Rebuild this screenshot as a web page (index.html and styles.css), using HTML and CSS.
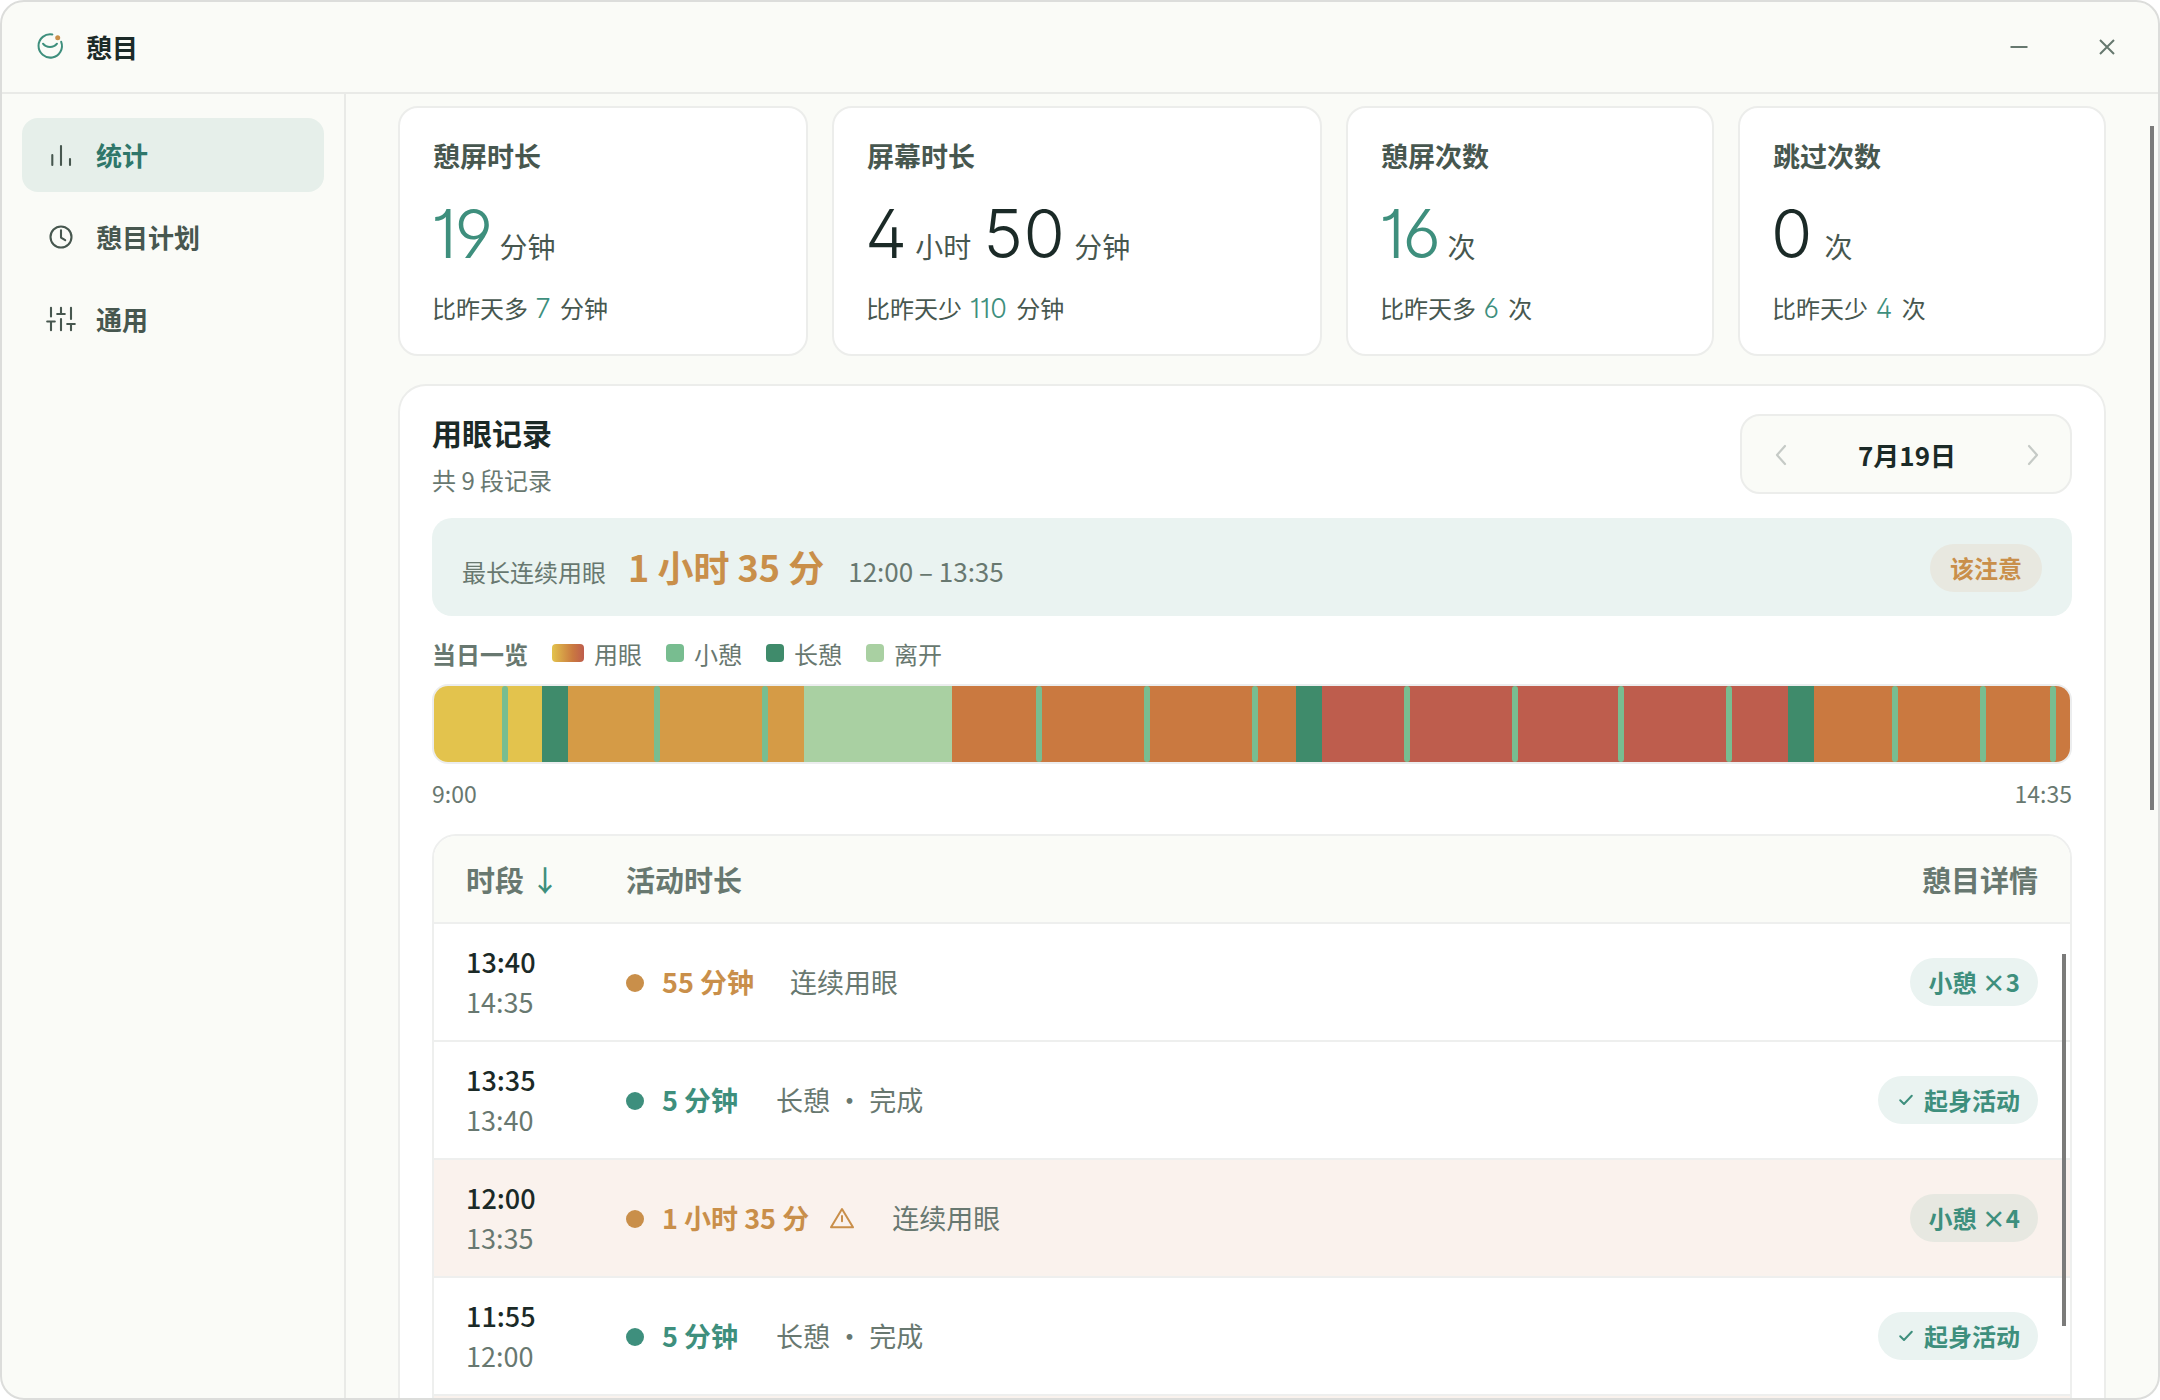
FILE: index.html
```html
<!DOCTYPE html>
<html lang="zh-CN">
<head>
<meta charset="utf-8">
<title>憩目</title>
<link rel="stylesheet" href="styles.css">
</head>
<body>
<div class="window">
  <header class="titlebar">
    <svg class="logo" viewBox="0 0 32 32">
      <path d="M18.4 4.4A11.7 11.7 0 1 0 27.2 11.8" stroke="#3e8f7d"/>
      <path d="M9 13.7C12.5 18.2 19.5 18.2 23 13.7" stroke="#3e8f7d"/>
      <circle cx="23.7" cy="7.7" r="2.5" fill="#c98f4a" stroke="none"/>
    </svg>
    <span class="app-name">憩目</span>
    <div class="controls">
      <svg viewBox="0 0 20 20"><path d="M1.5 10H18.5"/></svg>
      <svg viewBox="0 0 20 20"><path d="M3 3L17 17M17 3L3 17"/></svg>
    </div>
  </header>
  <div class="body">
    <nav class="sidebar">
      <a class="nav-item active">
        <svg viewBox="0 0 32 32"><path d="M7.3 16V26M16 7V26M25 20V26"/></svg>
        <span>统计</span>
      </a>
      <a class="nav-item">
        <svg viewBox="0 0 32 32"><circle cx="16" cy="16" r="10.5"/><path d="M16 9.3V16.6L20.2 19.2"/></svg>
        <span>憩目计划</span>
      </a>
      <a class="nav-item">
        <svg viewBox="0 0 32 32"><path d="M6 27.3V18.5M6 13.5V4.8M16 27.3V16M16 11V4.8M26 27.3V21M26 16V4.8M2.2 18.5H9.8M12.2 11H19.8M22.2 21H29.8"/></svg>
        <span>通用</span>
      </a>
    </nav>
    <main class="content">
      <section class="cards">
        <article class="card">
          <h3>憩屏时长</h3>
          <p class="value green"><b>19</b><span>分钟</span></p>
          <p class="delta">比昨天多 <b>7</b> 分钟</p>
        </article>
        <article class="card">
          <h3>屏幕时长</h3>
          <p class="value"><b>4</b><span>小时</span><b class="next">50</b><span>分钟</span></p>
          <p class="delta">比昨天少 <b>110</b> 分钟</p>
        </article>
        <article class="card">
          <h3>憩屏次数</h3>
          <p class="value green"><b>16</b><span>次</span></p>
          <p class="delta">比昨天多 <b>6</b> 次</p>
        </article>
        <article class="card">
          <h3>跳过次数</h3>
          <p class="value"><b>0</b><span>次</span></p>
          <p class="delta">比昨天少 <b>4</b> 次</p>
        </article>
      </section>
      <section class="panel">
        <div class="panel-head">
          <div>
            <h2>用眼记录</h2>
            <p class="count">共 9 段记录</p>
          </div>
          <div class="date-picker">
            <svg viewBox="0 0 12 22"><path d="M10 2L2 11L10 20"/></svg>
            <span>7月19日</span>
            <svg viewBox="0 0 12 22"><path d="M2 2L10 11L2 20"/></svg>
          </div>
        </div>
        <div class="banner">
          <span class="banner-label">最长连续用眼</span>
          <strong>1 小时 35 分</strong>
          <span class="banner-range">12:00 – 13:35</span>
          <span class="badge">该注意</span>
        </div>
        <div class="legend">
          <strong>当日一览</strong>
          <span><i class="sw use"></i>用眼</span>
          <span><i class="sw short"></i>小憩</span>
          <span><i class="sw long"></i>长憩</span>
          <span><i class="sw away"></i>离开</span>
        </div>
        <div class="timeline">
          <div class="seg l1" style="width:108px"><i style="left:68px"></i></div>
          <div class="seg long" style="width:26px"></div>
          <div class="seg l2" style="width:236px"><i style="left:86px"></i><i style="left:194px"></i></div>
          <div class="seg away" style="width:148px"></div>
          <div class="seg l3" style="width:344px"><i style="left:84px"></i><i style="left:192px"></i><i style="left:300px"></i></div>
          <div class="seg long" style="width:26px"></div>
          <div class="seg l4" style="width:466px"><i style="left:82px"></i><i style="left:190px"></i><i style="left:296px"></i><i style="left:404px"></i></div>
          <div class="seg long" style="width:26px"></div>
          <div class="seg l3" style="width:256px"><i style="left:78px"></i><i style="left:166px"></i><i style="left:236px"></i></div>
        </div>
        <div class="scale"><span>9:00</span><span>14:35</span></div>
        <div class="table">
          <div class="thead">
            <span>时段 <em>↓</em></span><span>活动时长</span><span class="end">憩目详情</span>
          </div>
          <div class="row">
            <div class="time"><b>13:40</b><span>14:35</span></div>
            <div class="activity use"><i></i><strong>55 分钟</strong><span>连续用眼</span></div>
            <span class="pill">小憩 ×3</span>
          </div>
          <div class="row">
            <div class="time"><b>13:35</b><span>13:40</span></div>
            <div class="activity rest"><i></i><strong>5 分钟</strong><span>长憩 ・ 完成</span></div>
            <span class="pill"><svg viewBox="0 0 20 20"><path d="M4.2 10.2L8 14L15.8 5.8"/></svg>起身活动</span>
          </div>
          <div class="row warn">
            <div class="time"><b>12:00</b><span>13:35</span></div>
            <div class="activity use"><i></i><strong>1 小时 35 分</strong>
              <svg viewBox="0 0 28 28"><path d="M14 5L25 23.3H3Z"/><path d="M14 12V17.2"/></svg>
              <span>连续用眼</span></div>
            <span class="pill">小憩 ×4</span>
          </div>
          <div class="row">
            <div class="time"><b>11:55</b><span>12:00</span></div>
            <div class="activity rest"><i></i><strong>5 分钟</strong><span>长憩 ・ 完成</span></div>
            <span class="pill"><svg viewBox="0 0 20 20"><path d="M4.2 10.2L8 14L15.8 5.8"/></svg>起身活动</span>
          </div>
          <div class="row warn"></div>
          <div class="table-scroll"></div>
        </div>
      </section>
      <div class="page-scroll"></div>
    </main>
  </div>
</div>
</body>
</html>
```
FILE: styles.css
```css
* { box-sizing: border-box; margin: 0; padding: 0; }
body {
  background: #fff;
  color: #1b2a27;
  font-family: "Noto Sans CJK SC", sans-serif;
  font-size: 26px;
  overflow: hidden;
}
i, em { font-style: normal; }
svg { display: block; flex: none; fill: none; stroke: currentColor; stroke-linecap: round; stroke-linejoin: round; }

.window {
  display: flex;
  flex-direction: column;
  width: 2160px;
  height: 1400px;
  border: 2px solid #dcdddb;
  border-radius: 24px;
  background: #fafbf7;
  overflow: hidden;
}
.titlebar {
  display: flex;
  align-items: center;
  flex: none;
  height: 92px;
  padding: 0 41px 0 32px;
  border-bottom: 2px solid #e9eae7;
}
.logo { width: 32px; height: 32px; margin-bottom: 2px; stroke-width: 2; }
.app-name { margin-left: 20px; font-weight: 600; line-height: 40px; }
.controls { display: flex; gap: 68px; margin-left: auto; color: #66786f; }
.controls svg { width: 20px; height: 20px; stroke-width: 2; stroke-linecap: butt; }

.body { display: flex; flex: 1; min-height: 0; }
.sidebar {
  display: flex;
  flex-direction: column;
  gap: 8px;
  flex: none;
  width: 344px;
  padding: 24px 20px;
  border-right: 2px solid #e9eae7;
}
.nav-item {
  display: flex;
  align-items: center;
  gap: 19px;
  height: 74px;
  padding-left: 23px;
  border-radius: 16px;
  color: #47574f;
  font-weight: 600;
}
.nav-item svg { width: 32px; height: 32px; stroke-width: 2.1; }
.nav-item span { padding-bottom: 2px; }
.nav-item.active { background: #e6efea; }
.nav-item.active span { color: #2f776a; }

.content { position: relative; flex: 1; min-width: 0; padding: 12px 52px 0; }
.cards { display: grid; grid-template-columns: 410px 490px 368px 368px; gap: 24px; }
.card {
  height: 250px;
  padding: 28px 32px 0;
  border: 2px solid #ecedeb;
  border-radius: 20px;
  background: #fff;
}
.card h3 { padding-left: 1px; color: #47574f; font-size: 27px; font-weight: 600; line-height: 40px; }
.value { display: flex; align-items: baseline; height: 84px; margin-top: 16px; line-height: 84px; }
.value b {
  margin-left: -1px;
  font-family: Inter, sans-serif;
  font-size: 67px;
  font-weight: 300;
  font-feature-settings: "ss01", "cv01", "cv09";
  letter-spacing: -1px;
}
.value span { margin-left: 9px; color: #47574f; font-size: 28px; }
.value .next { margin-left: 12px; letter-spacing: 0.5px; }
.value.green b { letter-spacing: -2.5px; }
.card:last-child .value span { margin-left: 13px; }
.green b, .delta b { color: #3e8f7d; }
.delta { margin-top: 14px; color: #47574f; font-size: 24px; line-height: 36px; }
.delta b {
  margin: 0 4px 0 2px;
  font-family: Inter, sans-serif;
  font-size: 27px;
  font-weight: 300;
  line-height: 1;
  font-feature-settings: "ss01", "cv01", "cv09";
}

.panel {
  height: 1200px;
  margin-top: 28px;
  padding: 28px 32px;
  border: 2px solid #ecedeb;
  border-radius: 28px;
  background: #fff;
}
.panel-head { display: flex; justify-content: space-between; height: 80px; }
.panel h2 { font-size: 30px; font-weight: 600; line-height: 36px; }
.count { margin-top: 12px; color: #687870; font-size: 24px; line-height: 36px; }
.date-picker {
  display: flex;
  align-items: center;
  justify-content: space-between;
  width: 332px;
  height: 80px;
  padding: 0 31px 0 33px;
  border: 2px solid #ecedeb;
  border-radius: 20px;
  background: #fafbf7;
  font-weight: 600;
}
.date-picker svg { width: 12px; height: 22px; margin-top: 2px; stroke: #c5cac6; stroke-width: 2.2; }

.banner {
  display: flex;
  align-items: baseline;
  height: 98px;
  margin-top: 24px;
  padding: 0 30px;
  border-radius: 20px;
  background: #eaf3f1;
  color: #687870;
  font-size: 24px;
  line-height: 96px;
}
.banner strong { margin-left: 22px; color: #c98f4a; font-size: 36px; font-weight: 600; }
.banner-range { margin-left: 24px; font-size: 26px; }
.badge {
  align-self: center;
  height: 48px;
  margin: 2px 0 0 auto;
  padding: 0 20px;
  border-radius: 24px;
  background: #e8e8e0;
  color: #c98f4a;
  font-weight: 600;
  line-height: 48px;
}

.legend { display: flex; align-items: center; gap: 24px; height: 36px; margin-top: 20px; color: #687870; font-size: 24px; line-height: 36px; }
.legend strong { font-weight: 600; }
.legend span { display: flex; align-items: center; gap: 10px; }
.sw { width: 18px; height: 18px; margin-bottom: 2px; border-radius: 4px; }
.sw.use { width: 32px; background: linear-gradient(90deg, #e3c34d, #d59b46 35%, #ca7940 65%, #be5d4d); }
.short { background: #78bd90; }
.long { background: #3f8b6b; }
.away { background: #a9d0a2; }

.timeline {
  display: flex;
  height: 80px;
  margin-top: 12px;
  border: 2px solid #ecedee;
  border-radius: 16px;
  overflow: hidden;
}
.seg { position: relative; flex: none; }
.seg i { position: absolute; top: 0; bottom: 0; width: 6px; border-radius: 3px; background: #78bd90; }
.l1 { background: #e3c34d; }
.l2 { background: #d59b46; }
.l3 { background: #ca7940; }
.l4 { background: #be5d4d; }
.scale { display: flex; justify-content: space-between; height: 36px; margin-top: 11px; color: #687870; font-size: 23px; line-height: 36px; }

.table {
  position: relative;
  height: 640px;
  margin-top: 23px;
  border: 2px solid #eeefee;
  border-radius: 24px;
  overflow: hidden;
}
.thead, .row {
  display: grid;
  grid-template-columns: 160px 1fr auto;
  align-items: center;
  padding: 0 32px;
  border-bottom: 2px solid #eeefee;
}
.thead { height: 88px; background: #fafbf7; color: #687870; font-size: 29px; font-weight: 600; line-height: 42px; }
.thead em { color: #3e8f7d; font-weight: 500; }
.row { height: 118px; font-size: 27px; }
.row.warn { background: #faf2ed; }
.time { display: flex; flex-direction: column; line-height: 40px; color: #687870; }
.time b { color: #1b2a27; font-weight: 500; }
.activity { display: flex; align-items: center; color: #3e8f7d; line-height: 40px; }
.activity i { width: 18px; height: 18px; margin: 1px 18px 0 0; border-radius: 50%; background: currentColor; }
.activity.use { color: #c98f4a; }
.activity strong { padding-bottom: 1px; font-weight: 600; }
.activity svg { width: 28px; height: 28px; margin-left: 19px; stroke-width: 2; }
.activity span { margin-left: 36px; padding-bottom: 1px; color: #687870; }
.activity.rest span { margin-left: 38px; }
.pill {
  display: flex;
  align-items: center;
  gap: 8px;
  height: 48px;
  padding: 0 18px 1px;
  border-radius: 24px;
  background: #eaf3f1;
  color: #3e8f7d;
  font-size: 24px;
  font-weight: 600;
}
.warn .pill { background: #e7e8e1; }
.pill svg { width: 20px; height: 20px; stroke-width: 2; }

.table-scroll, .page-scroll { position: absolute; right: 4px; width: 4px; background: #7b7b7a; }
.table-scroll { top: 118px; height: 372px; }
.page-scroll { top: 32px; height: 684px; }
```
